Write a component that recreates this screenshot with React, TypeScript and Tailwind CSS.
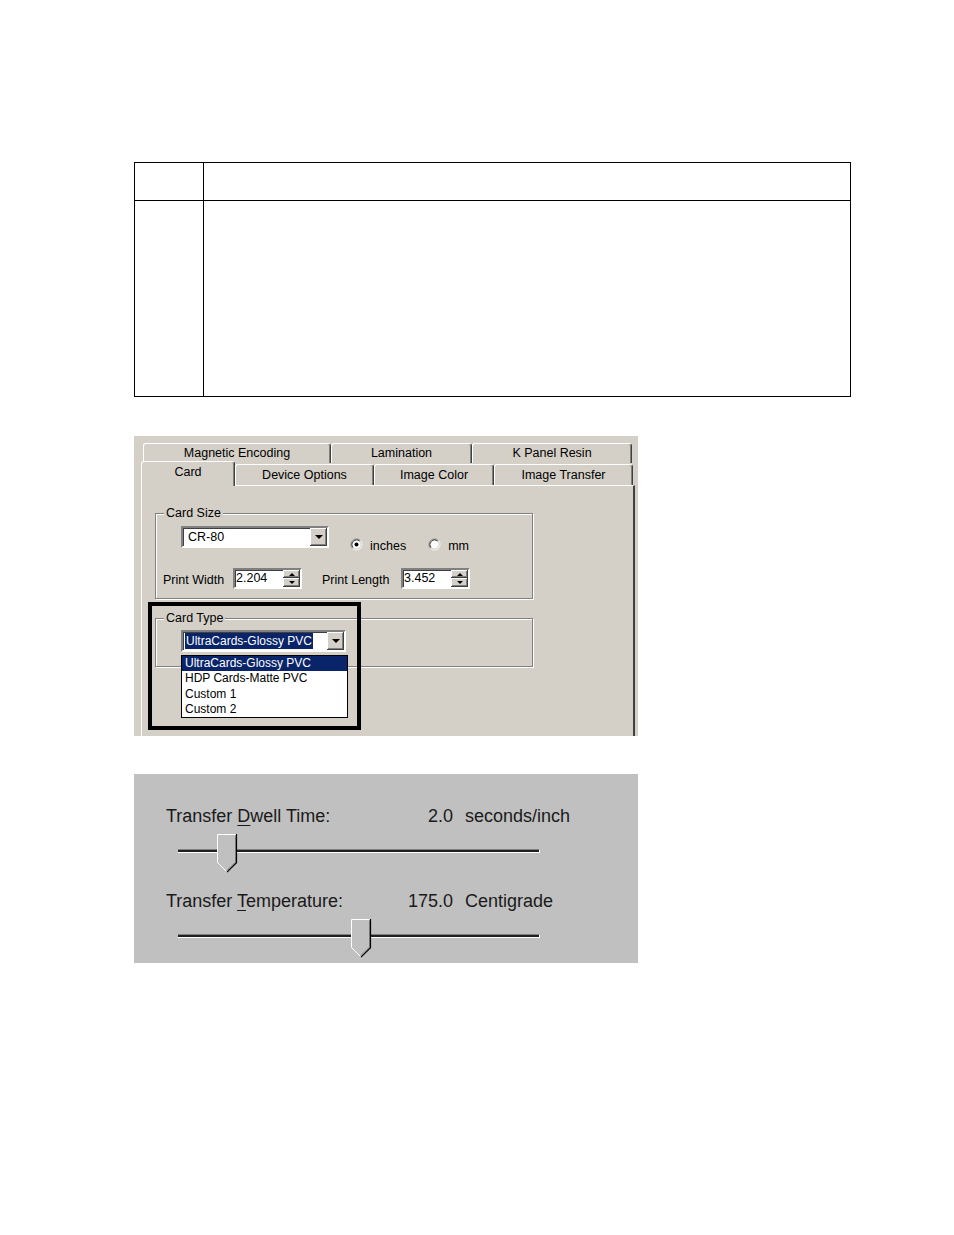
import type { ReactNode } from "react"

/* ------------------------------------------------------------------ */
/*  Classic Windows bevels                                              */
/* ------------------------------------------------------------------ */

const raised =
  "shadow-[inset_-1px_-1px_0_#404040,inset_1px_1px_0_#ffffff,inset_-2px_-2px_0_#808080]"
const sunken =
  "border-2 border-t-[#808080] border-l-[#808080] border-b-white border-r-white shadow-[inset_1px_1px_0_#404040]"

function DownArrow({ w = 8, h = 4 }: { w?: number; h?: number }) {
  return (
    <svg width={w} height={h} viewBox={`0 0 ${w} ${h}`} aria-hidden="true">
      <polygon points={`0,0 ${w},0 ${w / 2},${h}`} fill="#000" />
    </svg>
  )
}

function UpArrow({ w = 6, h = 3 }: { w?: number; h?: number }) {
  return (
    <svg width={w} height={h} viewBox={`0 0 ${w} ${h}`} aria-hidden="true">
      <polygon points={`0,${h} ${w},${h} ${w / 2},0`} fill="#000" />
    </svg>
  )
}

/* ------------------------------------------------------------------ */
/*  Tabs                                                                */
/* ------------------------------------------------------------------ */

type TabDef = { label: string; w: string; selected?: boolean }

const backTabs: TabDef[] = [
  { label: "Magnetic Encoding", w: "w-[188px]" },
  { label: "Lamination", w: "w-[141px]" },
  { label: "K Panel Resin", w: "w-[160px]" },
]

const frontTabs: TabDef[] = [
  { label: "Card", w: "w-[94px]", selected: true },
  { label: "Device Options", w: "w-[139px]" },
  { label: "Image Color", w: "w-[120px]" },
  { label: "Image Transfer", w: "w-[139px]" },
]

function Tab({ t }: { t: TabDef }) {
  return (
    <div
      className={`${t.w} ${
        t.selected ? "h-[25px] -mb-px relative z-10 pb-[3px]" : "h-[21px]"
      } shrink-0 bg-[#d4d0c8] border-t border-l border-white border-r border-r-[#404040] shadow-[inset_-1px_0_0_#808080] rounded-t-[3px] flex items-center justify-center text-[12.5px] text-black`}
    >
      {t.label}
    </div>
  )
}

/* ------------------------------------------------------------------ */
/*  Controls                                                            */
/* ------------------------------------------------------------------ */

function Combo({ w, children }: { w: string; children: ReactNode }) {
  return (
    <div className={`${w} h-[22px] shrink-0 bg-white flex items-stretch ${sunken}`}>
      <div className="flex-1 flex items-center pl-[2px] overflow-hidden whitespace-nowrap">
        {children}
      </div>
      <div className={`w-[17px] bg-[#d4d0c8] ${raised} flex items-center justify-center`}>
        <DownArrow />
      </div>
    </div>
  )
}

function Spin({ w, value }: { w: string; value: string }) {
  return (
    <div className={`${w} h-[21px] bg-white flex items-stretch ${sunken}`}>
      <div className="flex-1 flex items-center pl-[1px] text-[12.5px]">{value}</div>
      <div className="w-[17px] flex flex-col">
        <div className={`flex-1 bg-[#d4d0c8] ${raised} flex items-center justify-center`}>
          <UpArrow />
        </div>
        <div className={`flex-1 bg-[#d4d0c8] ${raised} flex items-center justify-center`}>
          <DownArrow w={6} h={3} />
        </div>
      </div>
    </div>
  )
}

function RadioDot({ checked }: { checked?: boolean }) {
  return (
    <svg width="13" height="13" viewBox="0 0 13 13" aria-hidden="true">
      <circle cx="6.5" cy="6.5" r="4.5" fill="#ffffff" />
      <path d="M2.61 10.39 A5.5 5.5 0 0 1 10.39 2.61" stroke="#808080" fill="none" />
      <path d="M10.39 2.61 A5.5 5.5 0 0 1 2.61 10.39" stroke="#ffffff" fill="none" />
      <path d="M3.32 9.68 A4.5 4.5 0 0 1 9.68 3.32" stroke="#404040" fill="none" />
      <path d="M9.68 3.32 A4.5 4.5 0 0 1 3.32 9.68" stroke="#d4d0c8" fill="none" />
      {checked && <circle cx="6.5" cy="6.5" r="2" fill="#000000" />}
    </svg>
  )
}

function Radio({ checked, label }: { checked?: boolean; label: string }) {
  return (
    <div className="flex items-center h-[15px]">
      <RadioDot checked={checked} />
      <span className="ml-[7px] mt-[3px] text-[12.5px] leading-[15px]">{label}</span>
    </div>
  )
}

function GroupBox({
  label,
  h,
  className = "",
  children,
}: {
  label: string
  h: string
  className?: string
  children?: ReactNode
}) {
  return (
    <div
      className={`relative w-[378px] ${h} border border-[#808080] shadow-[inset_1px_1px_0_#ffffff,1px_1px_0_#ffffff] ${className}`}
    >
      <span className="absolute left-[8px] -top-[8px] px-[2px] bg-[#d4d0c8] text-[12.5px] leading-[15px]">
        {label}
      </span>
      {children}
    </div>
  )
}

/* ------------------------------------------------------------------ */
/*  Card dialog                                                         */
/* ------------------------------------------------------------------ */

const cardTypes = ["UltraCards-Glossy PVC", "HDP Cards-Matte PVC", "Custom 1", "Custom 2"]

function CardDialog() {
  return (
    <div className="ml-[134px] mt-[39px] w-[504px] h-[300px] bg-[#d4d0c8] overflow-hidden flex flex-col text-black">
      {/* back row */}
      <div className="flex pl-[9px] pt-[7px] h-[27px] shrink-0">
        {backTabs.map((t) => (
          <div
            key={t.label}
            className={`${t.w} h-[20px] shrink-0 bg-[#d4d0c8] border-t border-l border-white border-r border-r-[#404040] shadow-[inset_-1px_0_0_#808080] rounded-t-[3px] flex items-center justify-center text-[12.5px]`}
          >
            {t.label}
          </div>
        ))}
      </div>

      {/* front row */}
      <div className="flex items-end pl-[7px] h-[24px] -mt-[2px] shrink-0 relative">
        {frontTabs.map((t) => (
          <Tab key={t.label} t={t} />
        ))}
      </div>

      {/* panel */}
      <div className="relative ml-[7px] w-[494px] flex-1 border-t border-l border-white border-r-2 border-r-[#404040] pl-[13px] pt-[27px]">
        <GroupBox label="Card Size" h="h-[86px]">
          <div className="flex h-[22px] pl-[25px] mt-[12px]">
            <Combo w="w-[148px]">
              <span className="pl-[3px] text-[12.5px]">CR-80</span>
            </Combo>
            <div className="flex items-start ml-[21px] mt-[11px]">
              <Radio checked label="inches" />
              <div className="ml-[22px]">
                <Radio label="mm" />
              </div>
            </div>
          </div>
          <div className="flex items-center pl-[7px] mt-[19px] text-[12.5px]">
            <span className="w-[70px] mt-[4px]">Print Width</span>
            <Spin w="w-[69px]" value="2.204" />
            <span className="w-[79px] ml-[20px] mt-[4px]">Print Length</span>
            <Spin w="w-[69px]" value="3.452" />
          </div>
        </GroupBox>

        <GroupBox label="Card Type" h="h-[49px]" className="mt-[19px]">
          <div className="pl-[25px] pt-[11px]">
            <Combo w="w-[165px]">
              <span className="bg-[#0a246a] text-white text-[12px] leading-[16px] pl-px pr-[1px]">
                UltraCards-Glossy PVC
              </span>
            </Combo>
          </div>

          {/* open list */}
          <div className="absolute left-[25px] top-[36px] z-20 w-[167px] h-[63px] bg-white border border-black text-[12px] leading-[15.25px]">
            {cardTypes.map((c, i) => (
              <div
                key={c}
                className={`pl-[3px] whitespace-nowrap ${i === 0 ? "bg-[#0a246a] text-white" : ""}`}
              >
                {c}
              </div>
            ))}
          </div>
        </GroupBox>

        {/* callout frame */}
        <div className="absolute left-[6px] top-[116px] w-[213px] h-[128px] border-[4px] border-black z-30 pointer-events-none" />
      </div>
    </div>
  )
}

/* ------------------------------------------------------------------ */
/*  Slider panel                                                        */
/* ------------------------------------------------------------------ */

function Thumb() {
  return (
    <svg width="21" height="39" viewBox="0 0 21 39" aria-hidden="true">
      <polygon points="0.5,0.5 19.5,0.5 19.5,28.5 10,38 0.5,28.5" fill="#c0c0c0" />
      <path d="M0.5 28.5 V0.5 H19" stroke="#ffffff" strokeWidth="1" fill="none" />
      <path d="M0.5 28.5 L9.5 37.5" stroke="#ffffff" strokeWidth="1" fill="none" />
      <path d="M18.5 1.5 V28 L10 36.5" stroke="#808080" strokeWidth="1" fill="none" />
      <path d="M19.5 0 V28.7 L10 38.2" stroke="#000000" strokeWidth="1.2" fill="none" />
    </svg>
  )
}

function Track({ left }: { left: string }) {
  return (
    <div className="relative ml-[12px] w-[362px] h-[39px]">
      <div className="absolute left-0 top-[15px] w-[362px] h-[4px] border-t border-t-[#808080] border-b border-b-white border-r border-r-white bg-[#202020]" />
      <div className={`absolute top-0 ${left}`}>
        <Thumb />
      </div>
    </div>
  )
}

function TransferSliders() {
  return (
    <div className="ml-[134px] mt-[38px] w-[504px] h-[189px] bg-[#c0c0c0] pl-[32px] pt-[31px] text-[18px] leading-[22px] text-[#1a1a1a]">
      <div className="flex">
        <div className="w-[287px] flex justify-between">
          <span>
            Transfer <span className="underline underline-offset-[3px]">D</span>well Time:
          </span>
          <span>2.0</span>
        </div>
        <span className="ml-[12px]">seconds/inch</span>
      </div>
      <div className="mt-[7px]">
        <Track left="left-[39px]" />
      </div>

      <div className="flex mt-[17px]">
        <div className="w-[287px] flex justify-between">
          <span>
            Transfer <span className="underline underline-offset-[3px]">T</span>emperature:
          </span>
          <span>175.0</span>
        </div>
        <span className="ml-[12px]">Centigrade</span>
      </div>
      <div className="mt-[7px]">
        <Track left="left-[173px]" />
      </div>
    </div>
  )
}

/* ------------------------------------------------------------------ */
/*  Page                                                                */
/* ------------------------------------------------------------------ */

export default function App() {
  return (
    <div className="w-[954px] min-h-[1235px] bg-white pt-[162px] font-['Liberation_Sans',Arial,sans-serif]">
      {/* empty table */}
      <div className="ml-[134px] w-[717px] border-[1.5px] border-black">
        <div className="flex h-[38px] border-b-[1.5px] border-black">
          <div className="w-[69px] border-r-[1.5px] border-black" />
          <div className="flex-1" />
        </div>
        <div className="flex h-[195px]">
          <div className="w-[69px] border-r-[1.5px] border-black" />
          <div className="flex-1" />
        </div>
      </div>

      <CardDialog />
      <TransferSliders />
    </div>
  )
}
